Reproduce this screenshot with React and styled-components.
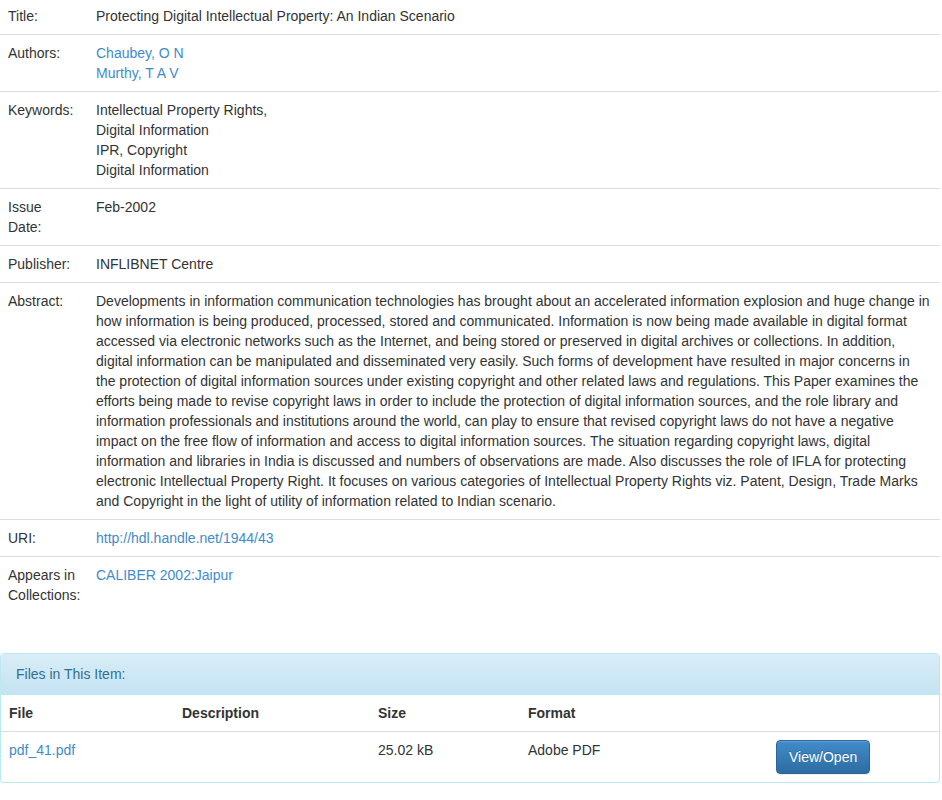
import React from "react";
import styled, { createGlobalStyle } from "styled-components";

const GlobalStyle = createGlobalStyle`
  html, body {
    margin: 0;
    padding: 0;
    background: #fff;
  }
  body {
    font-family: "Liberation Sans", Arial, Helvetica, sans-serif;
    font-size: 14px;
    line-height: 20px;
    color: #333;
  }
`;

const Page = styled.div`
  width: 940px;
  margin-top: -2px;
`;

const ItemTable = styled.div`
  display: flex;
  flex-direction: column;
  margin-bottom: 40px;
`;

const Row = styled.div`
  display: grid;
  grid-template-columns: 88px 1fr;
  border-top: ${(p) => (p.first ? "none" : "1px solid #ddd")};
`;

const Label = styled.div`
  padding: 8px 10px 8px 8px;
`;

const Value = styled.div`
  padding: 8px;
`;

const Link = styled.a`
  color: #428bca;
  text-decoration: none;
  display: ${(p) => (p.block ? "block" : "inline")};
`;

const Panel = styled.div`
  border: 1px solid #bce8f1;
  border-radius: 4px;
  box-shadow: 0 1px 1px rgba(0, 0, 0, 0.05);
  overflow: hidden;
`;

const PanelHeading = styled.div`
  padding: 10px 15px;
  color: #31708f;
  background: linear-gradient(to bottom, #d9edf7 0%, #c4e3f3 100%);
  border-bottom: 1px solid #bce8f1;
`;

const FileRow = styled.div`
  display: grid;
  grid-template-columns: 173px 196px 150px 248px 1fr;
  border-top: ${(p) => (p.head ? "none" : "1px solid #ddd")};
`;

const Cell = styled.div`
  padding: 8px;
  font-weight: ${(p) => (p.head ? "bold" : "normal")};
`;

const Button = styled.a`
  display: inline-block;
  padding: 6px 12px;
  border: 1px solid #2b669a;
  border-radius: 4px;
  color: #fff;
  text-decoration: none;
  background: linear-gradient(to bottom, #428bca 0%, #2d6ca2 100%);
  box-shadow: inset 0 1px 0 rgba(255, 255, 255, 0.15), 0 1px 1px rgba(0, 0, 0, 0.075);
  text-shadow: 0 -1px 0 rgba(0, 0, 0, 0.2);
`;

const abstract =
  "Developments in information communication technologies has brought about an accelerated information explosion and huge change in how information is being produced, processed, stored and communicated. Information is now being made available in digital format accessed via electronic networks such as the Internet, and being stored or preserved in digital archives or collections. In addition, digital information can be manipulated and disseminated very easily. Such forms of development have resulted in major concerns in the protection of digital information sources under existing copyright and other related laws and regulations. This Paper examines the efforts being made to revise copyright laws in order to include the protection of digital information sources, and the role library and information professionals and institutions around the world, can play to ensure that revised copyright laws do not have a negative impact on the free flow of information and access to digital information sources. The situation regarding copyright laws, digital information and libraries in India is discussed and numbers of observations are made. Also discusses the role of IFLA for protecting electronic Intellectual Property Right. It focuses on various categories of Intellectual Property Rights viz. Patent, Design, Trade Marks and Copyright in the light of utility of information related to Indian scenario.";

export default function App() {
  return (
    <Page>
      <GlobalStyle />
      <ItemTable>
        <Row first>
          <Label>Title:</Label>
          <Value>Protecting Digital Intellectual Property: An Indian Scenario</Value>
        </Row>
        <Row>
          <Label>Authors:</Label>
          <Value>
            <Link block href="#">Chaubey, O N</Link>
            <Link block href="#">Murthy, T A V</Link>
          </Value>
        </Row>
        <Row>
          <Label>Keywords:</Label>
          <Value>
            Intellectual Property Rights,
            <br />
            Digital Information
            <br />
            IPR, Copyright
            <br />
            Digital Information
          </Value>
        </Row>
        <Row>
          <Label>Issue Date:</Label>
          <Value>Feb-2002</Value>
        </Row>
        <Row>
          <Label>Publisher:</Label>
          <Value>INFLIBNET Centre</Value>
        </Row>
        <Row>
          <Label>Abstract:</Label>
          <Value>{abstract}</Value>
        </Row>
        <Row>
          <Label>URI:</Label>
          <Value>
            <Link href="#">http://hdl.handle.net/1944/43</Link>
          </Value>
        </Row>
        <Row>
          <Label>Appears in Collections:</Label>
          <Value>
            <Link href="#">CALIBER 2002:Jaipur</Link>
          </Value>
        </Row>
      </ItemTable>

      <Panel>
        <PanelHeading>Files in This Item:</PanelHeading>
        <FileRow head>
          <Cell head>File</Cell>
          <Cell head>Description</Cell>
          <Cell head>Size</Cell>
          <Cell head>Format</Cell>
          <Cell head></Cell>
        </FileRow>
        <FileRow>
          <Cell>
            <Link href="#">pdf_41.pdf</Link>
          </Cell>
          <Cell></Cell>
          <Cell>25.02 kB</Cell>
          <Cell>Adobe PDF</Cell>
          <Cell>
            <Button href="#">View/Open</Button>
          </Cell>
        </FileRow>
      </Panel>
    </Page>
  );
}
